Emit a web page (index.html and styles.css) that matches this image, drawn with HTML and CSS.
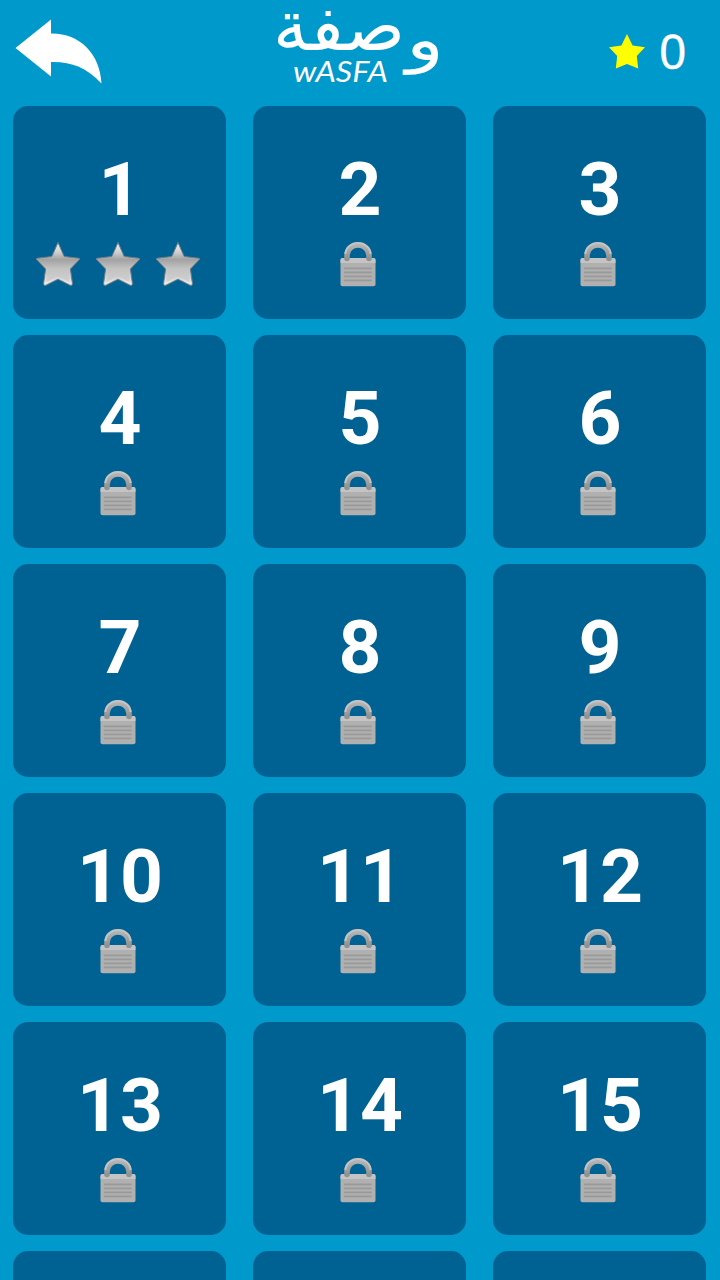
FILE: index.html
```
<!DOCTYPE html>
<html lang="ar">
<head>
    <meta charset="UTF-8">
    <meta name="viewport" content="width=device-width, initial-scale=1.0">
    <title>وصفة</title>
    <link rel="stylesheet" href="styles.css">
</head>
<body>

    <svg class="sprites" width="0" height="0">
        <defs>
            <linearGradient id="starFill" x1="0" y1="0" x2="0" y2="1">
                <stop offset="0" stop-color="#f4f4f4"/>
                <stop offset="0.22" stop-color="#d0d0d0"/>
                <stop offset="0.4" stop-color="#a2a2a2"/>
                <stop offset="0.6" stop-color="#c2c2c2"/>
                <stop offset="1" stop-color="#d4d4d4"/>
            </linearGradient>
            <linearGradient id="starEdge" x1="0" y1="0" x2="0" y2="1">
                <stop offset="0" stop-color="#c2c2c2" stop-opacity="0"/>
                <stop offset="1" stop-color="#ececec"/>
            </linearGradient>
            <linearGradient id="shackle" x1="0" y1="0" x2="0" y2="1">
                <stop offset="0" stop-color="#b4b4b4"/>
                <stop offset="1" stop-color="#929292"/>
            </linearGradient>
        </defs>
        <symbol id="star" viewBox="0 0 46 46">
            <path d="M23 1.5 L29.2 15.5 L44.3 17.3 Q45.3 18 44 19 L35.4 28 L37.5 43 Q37.3 45 35 44.3 L23 38.2 L11 44.3 Q8.7 45 8.5 43 L10.6 28 L2 19 Q0.7 18 1.7 17.3 L16.8 15.5 Z" fill="url(#starFill)" stroke="#6d7c86" stroke-width="1" stroke-linejoin="round"/>
            <path d="M12.2 28 L10.3 42.5 L23 36.2 L35.7 42.5 L33.8 28" fill="none" stroke="url(#starEdge)" stroke-width="1.8" stroke-linejoin="round"/>
        </symbol>
        <symbol id="lock" viewBox="0 0 36 46">
            <rect x="0.5" y="16" width="35" height="28.2" rx="2" fill="#b0b0b0"/>
            <path d="M0.5 21 V18 Q0.5 16 2.5 16 H33.5 Q35.5 16 35.5 18 V21 Z" fill="#c4c4c4"/>
            <path d="M7 16.5 V13.5 A11 10.5 0 0 1 29 13.5 V16.5" fill="none" stroke="url(#shackle)" stroke-width="5.6" stroke-linecap="round"/>
            <path d="M5.5 12 A12.5 11 0 0 1 30.5 12" fill="none" stroke="#c4c4c4" stroke-width="2"/>
            <path d="M4.5 26.3 H31 M4.5 30.3 H31 M4.5 34.3 H31 M4.5 38.3 H31" stroke="#999" stroke-width="1.7" stroke-linecap="round"/>
        </symbol>
    </svg>

    <div class="header">
        <svg class="back" viewBox="0 0 90 70">
            <path d="M0.5 31 L36 2.5 V16.5 C64 16 85 36 86.5 66.5 C71 50 56 44.5 36 45 V59.5 Z" fill="#fff"/>
        </svg>
        <svg class="logo" viewBox="0 0 180 90">
            <text class="logo-ar" x="8" y="50" textLength="132" lengthAdjust="spacingAndGlyphs">صفة</text>
            <text class="logo-waw" x="141" y="60" textLength="38" lengthAdjust="spacingAndGlyphs">و</text>
            <text class="logo-en" x="28" y="82" textLength="95" lengthAdjust="spacingAndGlyphs">wASFA</text>
        </svg>
        <div class="score">
            <svg class="score-star" viewBox="0 0 36 35">
                <path d="M18 0 L23.6 11.6 L36 13.3 L27.8 22 L29.2 34.5 L18 30 L6.8 34.5 L8.2 22 L0 13.3 L12.4 11.6 Z" fill="#ff0"/>
            </svg>
            <span class="score-value">0</span>
        </div>
    </div>

    <div class="levels" id="levels"></div>

    <script>
        const levels = document.getElementById('levels');

        function icon(name) {
            return `<svg class="${name}"><use href="#${name}"/></svg>`;
        }

        for (let i = 1; i <= 18; i++) {
            const card = document.createElement('div');
            card.className = 'card';
            // the last row is cut off by the bottom of the screen
            if (i <= 15) {
                card.innerHTML = `
                    <div class="number">${i}</div>
                    <div class="icons">${i === 1 ? icon('star').repeat(3) : icon('lock')}</div>
                `;
            } else {
                card.classList.add('cut');
            }
            levels.appendChild(card);
        }
    </script>
</body>
</html>
```
FILE: styles.css
```
* {
    box-sizing: border-box;
}
body {
    margin: 0;
    height: 1280px;
    overflow: hidden;
    background-color: #0099cc;
    color: #fff;
    font-family: Roboto, sans-serif;
}
.sprites {
    display: block;
}
.header {
    display: flex;
    align-items: flex-start;
    height: 106px;
    padding-left: 15px;
    padding-right: 34px;
}
.back {
    width: 90px;
    height: 70px;
    margin-top: 17px;
}
.logo {
    width: 180px;
    height: 90px;
    margin-left: 160px;
    overflow: visible;
}
.logo-ar,
.logo-waw {
    fill: #fff;
    font-family: "DejaVu Sans", sans-serif;
    font-size: 70px;
}
.logo-waw {
    font-size: 60px;
}
.logo-en {
    fill: #fff;
    font-family: Lato, sans-serif;
    font-style: italic;
    font-size: 28px;
}
.score {
    display: flex;
    align-items: center;
    gap: 14px;
    height: 102px;
    margin-left: auto;
}
.score-star {
    width: 36px;
    height: 35px;
}
.score-value {
    width: 27px;
    font-family: "Open Sans", sans-serif;
    font-size: 48px;
    line-height: 60px;
    -webkit-text-stroke: 0.6px #fff;
}
.levels {
    display: grid;
    grid-template-columns: repeat(3, 213px);
    gap: 16px 27px;
    padding-left: 13px;
}
.card {
    height: 213px;
    padding-top: 39px;
    border-radius: 15px;
    background-color: #006292;
}
.cut {
    height: 29px;
    padding-top: 0;
    border-radius: 15px 15px 0 0;
}
.number {
    height: 97px;
    padding-left: 1px;
    font-size: 75px;
    font-weight: bold;
    line-height: 88px;
    text-align: center;
}
.icons {
    display: flex;
    justify-content: center;
    gap: 14px;
    padding-right: 3px;
}
.star {
    width: 46px;
    height: 46px;
    margin: -1px 0;
}
.lock {
    width: 36px;
    height: 46px;
}
```
